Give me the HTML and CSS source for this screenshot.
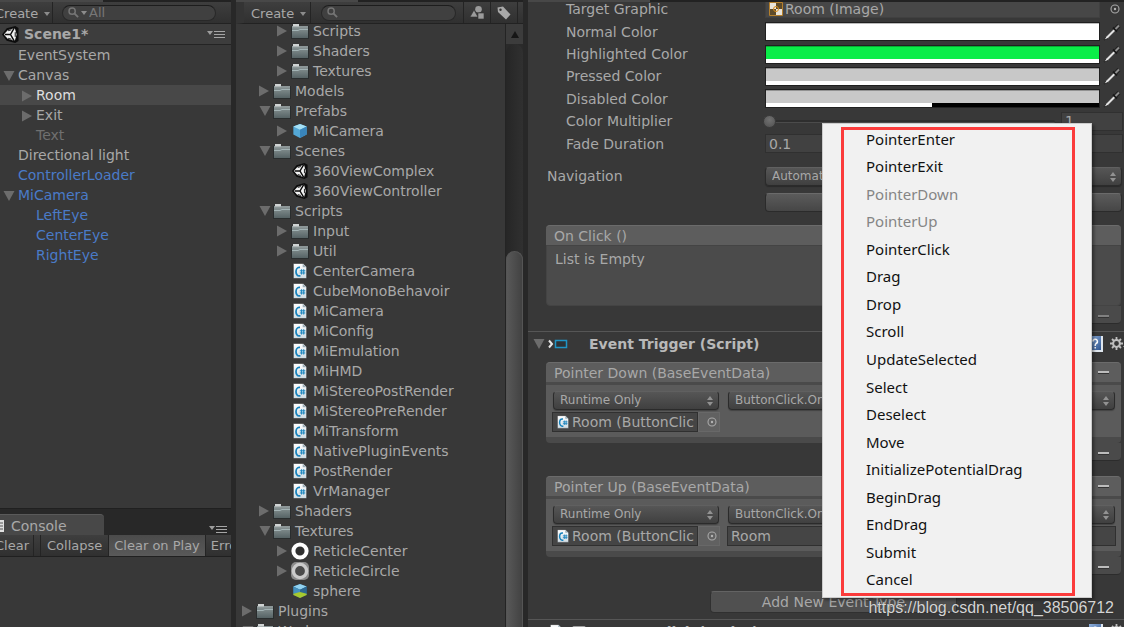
FILE: index.html
```html
<!DOCTYPE html>
<html lang="en">
<head>
<meta charset="utf-8">
<title>Scene1 - Editor</title>
<link rel="stylesheet" href="styles.css">
</head>
<body>
<svg class="defs" aria-hidden="true">
  <defs>
    <linearGradient id="g-folder" x1="0" y1="0" x2="0" y2="1"><stop offset="0" stop-color="#8d9899"/><stop offset="1" stop-color="#566365"/></linearGradient>
    <linearGradient id="g-doc" x1="0" y1="0" x2="0" y2="1"><stop offset="0" stop-color="#fff"/><stop offset="1" stop-color="#cfdbe2"/></linearGradient>
    <linearGradient id="g-help" x1="0" y1="0" x2="1" y2="1"><stop offset="0" stop-color="#8fb0dc"/><stop offset="1" stop-color="#2f5590"/></linearGradient>
  </defs>
  <symbol id="right" viewBox="0 0 10 12"><path d="M0 0.5L10 6L0 11.5z" fill="#6c6c6c"/></symbol>
  <symbol id="down" viewBox="0 0 12 10"><path d="M0.5 0h11L6 10z" fill="#6c6c6c"/></symbol>
  <symbol id="folder" viewBox="0 0 18 16"><path d="M0 3h18v13H0z" fill="#292d2e"/><path d="M1 3h16v12H1z" fill="url(#g-folder)"/><path d="M2 4V1h6v3z" fill="#d0d4d4"/><path d="M1 4h16" stroke="#8f999a"/><path d="M1 7.500h6l2-1h8" fill="none" stroke="#a3b3b5"/></symbol>
  <symbol id="cs" viewBox="0 0 16 18"><path d="M0.500 0.500h11l4 4v13h-15z" fill="url(#g-doc)" stroke="#202020" stroke-width=".6"/><path d="M11 .8v4h4z" fill="#9db0ba"/><path d="M8 5H7a3.500 4.800 0 0 0 0 9.600h1.500" fill="none" stroke="#1782bc" stroke-width="2"/><path d="M9.800 7v6M12.200 7v6M7.800 8.800h6.200M7.800 11.200h6.200" stroke="#1782bc" stroke-width="1.100"/></symbol>
  <symbol id="unity" viewBox="0 0 18 18"><path d="M0 9L5 2.500L14 0L17.500 2V16L14 18L5 15.500z" fill="#0d0d0d"/><path d="M2 9L6 4.500L13.500 2L15.500 9L13.500 16L6 13.500z" fill="#f2f2f2"/><path d="M9 9H3M9 9L13 2M9 9L13 16" stroke="#0d0d0d" stroke-width="1.600"/><path d="M6.500 5L10 4M6.500 13L10 14M14 6.500v5" stroke="#0d0d0d" stroke-width="1"/></symbol>
  <symbol id="cube" viewBox="0 0 16 18"><path d="M8 1L15.500 4V13L8 17L.5 13V4z" fill="#54a8d6"/><path d="M8 1L15.500 4L8 7.500L.5 4z" fill="#a5e0f5"/><path d="M8 7.500L15.500 4V13L8 17z" fill="#3985bb"/></symbol>
  <symbol id="sphere" viewBox="0 0 16 18"><path d="M8 1L15.500 4V13L8 17L.5 13V4z" fill="#2a6389"/><path d="M8 1L15.500 4L8 7.500L.5 4z" fill="#91d2f0"/><path d="M.5 4L8 7.500V11L.5 12z" fill="#4490bd"/><path d="M15.500 4L8 7.500V11L15.500 12z" fill="#2c6791"/><path d="M.5 12L8 10L15.500 12V13.500L8 17L.5 13.500z" fill="#a6c930"/></symbol>
  <symbol id="ring" viewBox="0 0 18 18"><circle cx="9" cy="9" r="6.600" fill="#303030" stroke="#fff" stroke-width="4"/></symbol>
  <symbol id="ring2" viewBox="0 0 18 18"><rect width="18" height="18" rx="5" fill="#8b8b8b"/><circle cx="9" cy="9" r="6.600" fill="#4b4b4b" stroke="#cbcbcb" stroke-width="3.400"/></symbol>
  <symbol id="search" viewBox="0 0 12 12"><circle cx="4.500" cy="4.500" r="3.400" fill="none" stroke="#757575" stroke-width="1.600"/><path d="M7 7l4 4" stroke="#757575" stroke-width="2"/></symbol>
  <symbol id="caret" viewBox="0 0 6 4"><path d="M0 0h6L3 4z" fill="#8c8c8c"/></symbol>
  <symbol id="options" viewBox="0 0 18 9"><path d="M0 1h6L3 5z" fill="#9d9d9d"/><path d="M7 1.500h11M7 4.500h11M7 7.500h11" stroke="#a6a6a6"/></symbol>
  <symbol id="shapes" viewBox="0 0 14 13"><circle cx="8.500" cy="3.300" r="3.300" fill="#9b9b9b"/><path d="M0 11L4 4L8 11z" fill="#9b9b9b" stroke="#333" stroke-width=".6"/><path d="M8 7h6v6H8z" fill="#9b9b9b" stroke="#333" stroke-width=".6"/></symbol>
  <symbol id="tag" viewBox="0 0 14 14"><path d="M.5 1.500L6 .5L13.500 8.500L9 13.500L1 6z" fill="#a8a8a8"/><circle cx="3.500" cy="3.700" r="1.200" fill="#333"/></symbol>
  <symbol id="target" viewBox="0 0 10 10"><circle cx="5" cy="5" r="4" fill="none" stroke="#a8a8a8" stroke-width="1.100"/><circle cx="5" cy="5" r="1.200" fill="#b4b4b4"/></symbol>
  <symbol id="pipette" viewBox="0 0 18 18"><path d="M1 17L3 13.500L11 5.500L13 7.500L5 15.500z" fill="#e2e2e2" stroke="#1c1c1c" stroke-width=".8"/><path d="M10 4.500l4 4" stroke="#181818" stroke-width="2"/><path d="M12.500 6L16 2.500" stroke="#202020" stroke-width="4"/><path d="M12.500 6L16 2.500" stroke="#8d8d8d" stroke-width="2"/></symbol>
  <symbol id="updown" viewBox="0 0 6 10"><path d="M0 4h6L3 0zM0 6h6L3 10z" fill="#929292"/></symbol>
  <symbol id="sprite" viewBox="0 0 14 14"><path d="M.5 .5h13v13H.5z" fill="#5e4b2a" stroke="#b5802c"/><path d="M1 1h6v6H1zM7 7h6v6H7z" fill="#e9e4da"/><circle cx="7" cy="7" r="2.500" fill="none" stroke="#d98e1d" stroke-width="1"/></symbol>
  <symbol id="trigger" viewBox="0 0 20 10"><path d="M1 1.500L4 5L1 8.500" fill="none" stroke="#e6e6e6" stroke-width="2"/><path d="M7.500 1.500h11v7h-11z" fill="#2d3235" stroke="#1f95c6" stroke-width="1.500"/></symbol>
  <symbol id="gear" viewBox="0 0 20 14"><circle cx="6.500" cy="6.500" r="3.400" fill="none" stroke="#c0c0c0" stroke-width="2"/><path d="M6.500 0v3M6.500 10v3M0 6.500h3M10 6.500h3M2 2l2 2M9 9l2 2M11 2L9 4M4 9l-2 2" stroke="#c0c0c0" stroke-width="1.800"/><path d="M13 9h6l-3 4z" fill="#c0c0c0"/></symbol>
  <symbol id="help" viewBox="0 0 14 16"><path d="M0 0h14v16H0z" fill="#dfe6ee"/><path d="M0 0h12v14H0z" fill="url(#g-help)"/><path d="M4 5.500a2.200 2.200 0 1 1 3 2L6.200 9v1M6.200 11v1.500" fill="none" stroke="#fff" stroke-width="1.500"/></symbol>
  <symbol id="consoleicon" viewBox="0 0 4 12"><path d="M0 0h4v12H0z" fill="#e0e0e0"/><path d="M0 3h3M0 6h3M0 9h3" stroke="#555"/></symbol>
</svg>

<main class="editor">
  <section class="column">
    <div class="tabstrip"><span class="tabedge"></span></div>
    <div class="panel hierarchy">
      <div class="toolbar">
        <button class="create create-cut">Create <svg class="i-caret"><use href="#caret"/></svg></button>
        <label class="search"><svg class="i-search"><use href="#search"/></svg><svg class="i-caret"><use href="#caret"/></svg><input type="text" placeholder="All" aria-label="Search hierarchy"></label>
      </div>
      <div class="scene"><svg class="i-scene"><use href="#unity"/></svg><strong>Scene1*</strong><svg class="i-options"><use href="#options"/></svg></div>
      <ul class="tree">
        <li>EventSystem</li>
        <li class="open"><svg class="i-down"><use href="#down"/></svg>Canvas</li>
        <li class="child selected"><svg class="i-right"><use href="#right"/></svg>Room</li>
        <li class="child"><svg class="i-right"><use href="#right"/></svg>Exit</li>
        <li class="child inactive">Text</li>
        <li>Directional light</li>
        <li class="prefab">ControllerLoader</li>
        <li class="prefab open"><svg class="i-down"><use href="#down"/></svg>MiCamera</li>
        <li class="child prefab">LeftEye</li>
        <li class="child prefab">CenterEye</li>
        <li class="child prefab">RightEye</li>
      </ul>
    </div>
    <div class="console-tabs"><div class="console-tab"><svg class="i-console"><use href="#consoleicon"/></svg>Console</div><svg class="i-options"><use href="#options"/></svg></div>
    <div class="console-bar"><button class="clear">Clear</button><span class="spacer"></span><button>Collapse</button><button class="on">Clear on Play</button><button class="err">Error Pause</button></div>
    <div class="console-body"></div>
  </section>

  <section class="column">
    <div class="tabstrip"><span class="tabedge wide"></span></div>
    <div class="toolbar project-bar">
      <button class="create">Create <svg class="i-caret"><use href="#caret"/></svg></button>
      <label class="search"><svg class="i-search"><use href="#search"/></svg><input type="text" aria-label="Search project"></label>
      <button class="tool" aria-label="Filter by type"><svg class="i-shapes"><use href="#shapes"/></svg></button>
      <button class="tool" aria-label="Filter by label"><svg class="i-tag"><use href="#tag"/></svg></button>
      <span class="tool-end"></span>
    </div>
    <div class="project">
      <ul class="files">
        <li class="l2"><svg class="i-right"><use href="#right"/></svg><svg class="i-file"><use href="#folder"/></svg>Scripts</li>
        <li class="l2"><svg class="i-right"><use href="#right"/></svg><svg class="i-file"><use href="#folder"/></svg>Shaders</li>
        <li class="l2"><svg class="i-right"><use href="#right"/></svg><svg class="i-file"><use href="#folder"/></svg>Textures</li>
        <li class="l1"><svg class="i-right"><use href="#right"/></svg><svg class="i-file"><use href="#folder"/></svg>Models</li>
        <li class="l1"><svg class="i-down"><use href="#down"/></svg><svg class="i-file"><use href="#folder"/></svg>Prefabs</li>
        <li class="l2"><svg class="i-right"><use href="#right"/></svg><svg class="i-file"><use href="#cube"/></svg>MiCamera</li>
        <li class="l1"><svg class="i-down"><use href="#down"/></svg><svg class="i-file"><use href="#folder"/></svg>Scenes</li>
        <li class="l2 leaf"><svg class="i-file"><use href="#unity"/></svg>360ViewComplex</li>
        <li class="l2 leaf"><svg class="i-file"><use href="#unity"/></svg>360ViewController</li>
        <li class="l1"><svg class="i-down"><use href="#down"/></svg><svg class="i-file"><use href="#folder"/></svg>Scripts</li>
        <li class="l2"><svg class="i-right"><use href="#right"/></svg><svg class="i-file"><use href="#folder"/></svg>Input</li>
        <li class="l2"><svg class="i-right"><use href="#right"/></svg><svg class="i-file"><use href="#folder"/></svg>Util</li>
        <li class="l2 leaf"><svg class="i-file"><use href="#cs"/></svg>CenterCamera</li>
        <li class="l2 leaf"><svg class="i-file"><use href="#cs"/></svg>CubeMonoBehavoir</li>
        <li class="l2 leaf"><svg class="i-file"><use href="#cs"/></svg>MiCamera</li>
        <li class="l2 leaf"><svg class="i-file"><use href="#cs"/></svg>MiConfig</li>
        <li class="l2 leaf"><svg class="i-file"><use href="#cs"/></svg>MiEmulation</li>
        <li class="l2 leaf"><svg class="i-file"><use href="#cs"/></svg>MiHMD</li>
        <li class="l2 leaf"><svg class="i-file"><use href="#cs"/></svg>MiStereoPostRender</li>
        <li class="l2 leaf"><svg class="i-file"><use href="#cs"/></svg>MiStereoPreRender</li>
        <li class="l2 leaf"><svg class="i-file"><use href="#cs"/></svg>MiTransform</li>
        <li class="l2 leaf"><svg class="i-file"><use href="#cs"/></svg>NativePluginEvents</li>
        <li class="l2 leaf"><svg class="i-file"><use href="#cs"/></svg>PostRender</li>
        <li class="l2 leaf"><svg class="i-file"><use href="#cs"/></svg>VrManager</li>
        <li class="l1"><svg class="i-right"><use href="#right"/></svg><svg class="i-file"><use href="#folder"/></svg>Shaders</li>
        <li class="l1"><svg class="i-down"><use href="#down"/></svg><svg class="i-file"><use href="#folder"/></svg>Textures</li>
        <li class="l2"><svg class="i-right"><use href="#right"/></svg><svg class="i-file i-big"><use href="#ring"/></svg>ReticleCenter</li>
        <li class="l2"><svg class="i-right"><use href="#right"/></svg><svg class="i-file i-big"><use href="#ring2"/></svg>ReticleCircle</li>
        <li class="l2 leaf"><svg class="i-file"><use href="#sphere"/></svg>sphere</li>
        <li><svg class="i-right"><use href="#right"/></svg><svg class="i-file"><use href="#folder"/></svg>Plugins</li>
        <li><svg class="i-down"><use href="#down"/></svg><svg class="i-file"><use href="#folder"/></svg>Works</li>
      </ul>
      <div class="scrollbar"><div class="up"><svg class="i-up" viewBox="0 0 8 7"><path d="M4 0L8 7H0z" fill="#161616"/></svg></div><div class="track"><div class="thumb"></div></div></div>
    </div>
  </section>

  <section class="column">
    <div class="tabstrip"><span class="tabedge wide"></span></div>
    <div class="inspector">
      <div class="props">
        <div class="prop"><span class="label">Target Graphic</span><div class="object-field"><svg class="i-sprite"><use href="#sprite"/></svg>Room (Image)</div><button class="pick" aria-label="Pick target graphic"><svg class="i-target"><use href="#target"/></svg></button></div>
        <div class="prop"><span class="label">Normal Color</span><button class="swatch white" aria-label="Normal Color"><span></span></button><button class="pick" aria-label="Pick normal color"><svg class="i-pipette"><use href="#pipette"/></svg></button></div>
        <div class="prop"><span class="label">Highlighted Color</span><button class="swatch green" aria-label="Highlighted Color"><span></span></button><button class="pick" aria-label="Pick highlighted color"><svg class="i-pipette"><use href="#pipette"/></svg></button></div>
        <div class="prop"><span class="label">Pressed Color</span><button class="swatch grey" aria-label="Pressed Color"><span></span></button><button class="pick" aria-label="Pick pressed color"><svg class="i-pipette"><use href="#pipette"/></svg></button></div>
        <div class="prop"><span class="label">Disabled Color</span><button class="swatch grey half" aria-label="Disabled Color"><span></span></button><button class="pick" aria-label="Pick disabled color"><svg class="i-pipette"><use href="#pipette"/></svg></button></div>
        <div class="prop"><label class="label" for="mult">Color Multiplier</label><input class="slider" id="mult" type="range" min="1" max="5" value="1"><input class="field number" type="text" value="1" aria-label="Color Multiplier value"></div>
        <div class="prop"><label class="label" for="fade">Fade Duration</label><input class="field" id="fade" type="text" value="0.1"></div>
      </div>
      <div class="nav">
        <label for="nav">Navigation</label>
        <div class="select"><select id="nav"><option>Automatic</option></select><svg class="i-updown"><use href="#updown"/></svg></div>
        <button class="visualize" aria-label="Visualize"></button>
      </div>
      <div class="event click">
        <h3>On Click ()</h3>
        <div class="empty">List is Empty</div>
        <div class="foot"><button aria-label="Remove" disabled></button></div>
      </div>
      <div class="component">
        <svg class="i-down"><use href="#down"/></svg><svg class="i-trigger"><use href="#trigger"/></svg>
        <h2>Event Trigger (Script)</h2>
        <svg class="i-help"><use href="#help"/></svg><svg class="i-gear"><use href="#gear"/></svg>
      </div>
      <div class="event">
        <h3>Pointer Down (BaseEventData)<button class="dash" aria-label="Remove Pointer Down"></button></h3>
        <div class="call">
          <div class="select"><select aria-label="Call state"><option>Runtime Only</option></select><svg class="i-updown"><use href="#updown"/></svg></div>
          <div class="select"><select aria-label="Function"><option>ButtonClick.OnDown</option></select><svg class="i-updown"><use href="#updown"/></svg></div>
          <div class="object"><div class="object-name"><svg class="i-cs"><use href="#cs"/></svg>Room (ButtonClic</div><button aria-label="Pick object"><svg class="i-target"><use href="#target"/></svg></button></div>
        </div>
        <div class="foot"><button class="dash" aria-label="Remove call"></button></div>
      </div>
      <div class="event">
        <h3>Pointer Up (BaseEventData)<button class="dash" aria-label="Remove Pointer Up"></button></h3>
        <div class="call">
          <div class="select"><select aria-label="Call state"><option>Runtime Only</option></select><svg class="i-updown"><use href="#updown"/></svg></div>
          <div class="select"><select aria-label="Function"><option>ButtonClick.OnUp</option></select><svg class="i-updown"><use href="#updown"/></svg></div>
          <div class="object"><div class="object-name"><svg class="i-cs"><use href="#cs"/></svg>Room (ButtonClic</div><button aria-label="Pick object"><svg class="i-target"><use href="#target"/></svg></button></div>
          <input class="argument" type="text" value="Room" aria-label="Argument">
        </div>
        <div class="foot"><button class="dash" aria-label="Remove call"></button></div>
      </div>
      <button class="add">Add New Event Type</button>
      <div class="component next">
        <svg class="i-cs"><use href="#cs"/></svg><input type="checkbox" aria-label="Enable component" checked>
        <h2>Button Click (Script)</h2>
        <svg class="i-help"><use href="#help"/></svg><svg class="i-gear"><use href="#gear"/></svg>
      </div>
    </div>
  </section>
</main>

<div class="menu" role="menu">
  <button role="menuitem">PointerEnter</button>
  <button role="menuitem">PointerExit</button>
  <button role="menuitem" disabled>PointerDown</button>
  <button role="menuitem" disabled>PointerUp</button>
  <button role="menuitem">PointerClick</button>
  <button role="menuitem">Drag</button>
  <button role="menuitem">Drop</button>
  <button role="menuitem">Scroll</button>
  <button role="menuitem">UpdateSelected</button>
  <button role="menuitem">Select</button>
  <button role="menuitem">Deselect</button>
  <button role="menuitem">Move</button>
  <button role="menuitem">InitializePotentialDrag</button>
  <button role="menuitem">BeginDrag</button>
  <button role="menuitem">EndDrag</button>
  <button role="menuitem">Submit</button>
  <button role="menuitem">Cancel</button>
  <div class="outline"></div>
</div>
<div class="watermark">https://blog.csdn.net/qq_38506712</div>
</body>
</html>
```
FILE: styles.css
```css
* { box-sizing: border-box; }
body {
  margin: 0;
  height: 100vh;
  overflow: hidden;
  background: #282828;
  color: #a8a8a8;
  font: 14px/20px "DejaVu Sans", sans-serif;
  position: relative;
}
button, input, select { font: inherit; color: inherit; margin: 0; padding: 0; border: 0; background: none; min-width: 0; }
button { text-align: left; white-space: nowrap; }
ul, h2, h3 { margin: 0; padding: 0; list-style: none; font-size: 14px; }
svg { flex: none; display: block; }
.defs { position: absolute; width: 0; height: 0; }

/* icon sizes */
.i-right { width: 10px; height: 12px; }
.i-down { width: 12px; height: 10px; }
.i-caret { width: 6px; height: 4px; }
.i-search { width: 11px; height: 11px; }
.i-options { width: 18px; height: 9px; }
.i-scene { width: 17px; height: 17px; }
.i-file { width: 18px; height: 16px; }
.i-big { height: 18px; }
.i-shapes { width: 14px; height: 13px; }
.i-tag { width: 14px; height: 14px; }
.i-up { width: 8px; height: 7px; }
.i-console { width: 4px; height: 12px; }
.i-sprite { width: 14px; height: 14px; }
.i-target { width: 10px; height: 10px; }
.i-pipette { width: 18px; height: 18px; }
.i-updown { width: 6px; height: 10px; }
.i-trigger { width: 20px; height: 10px; }
.i-help { width: 14px; height: 16px; }
.i-gear { width: 20px; height: 14px; }
.i-cs { width: 12px; height: 14px; }

.editor {
  display: grid;
  grid-template-columns: 231fr 287fr 596fr;
  grid-template-rows: 100%;
  column-gap: 5px;
  height: 100%;
}
.column { display: flex; flex-direction: column; min-width: 0; min-height: 0; overflow: hidden; }
.tabstrip { height: 2px; flex: none; background: #222; display: flex; }
.tabedge { width: 103px; background: #484848; }
.tabedge.wide { width: 122px; }

.toolbar {
  display: flex;
  align-items: center;
  flex: none;
  height: 22px;
  background: linear-gradient(#3e3e3e, #303030);
  border-bottom: 1px solid #222;
  font-size: 13px;
}
.create { display: flex; align-items: center; gap: 6px; height: 100%; padding: 2px 4px 0 7px; border-right: 1px solid #242424; }
.create-cut { margin-left: -12px; width: 65px; }
.search {
  display: flex;
  align-items: center;
  gap: 2px;
  flex: 1;
  height: 16px;
  margin: 0 15px 0 9px;
  padding: 0 8px 0 5px;
  background: #404040;
  border: 1px solid #282828;
  border-top-color: #1d1d1d;
  border-radius: 8px;
  min-width: 0;
}
.search input { flex: 1; width: 0; outline: 0; height: 14px; line-height: 14px; }
.search input::placeholder { color: #777; opacity: 1; }
.project-bar { border-left: 8px solid #343434; }
.project-bar .search { margin: 0 7px 0 10px; }
.tool { display: grid; place-items: center; width: 27px; height: 100%; border-left: 1px solid #242424; }
.tool-end { width: 6px; height: 100%; border-left: 1px solid #242424; }

.hierarchy { flex: 1; min-height: 0; background: #383838; border-bottom: 1px solid #202020; }
.scene { display: flex; align-items: center; gap: 5px; height: 21px; padding: 0 6px 0 2px; background: #3d3d3d; border-bottom: 1px solid #242424; }
.scene .i-options { margin-left: auto; }
.tree li { height: 20px; padding: 1px 0 0 18px; display: flex; align-items: center; gap: 4px; line-height: 19px; white-space: nowrap; }
.tree .open { padding-left: 3px; gap: 3px; }
.tree .child { padding-left: 36px; }
.tree .child:has(svg) { padding-left: 22px; }
.tree .selected { background: #484848; color: #dedede; }
.tree .inactive { color: #707070; }
.tree .prefab { color: #4a7bc8; }

.console-tabs { display: flex; align-items: flex-end; justify-content: space-between; flex: none; height: 26px; padding: 5px 4px 0 0; }
.console-tabs .i-options { margin-bottom: 1px; }
.console-tab { display: flex; align-items: center; gap: 7px; width: 104px; height: 21px; padding-top: 2px; background: #484848; border-top: 1px solid #5a5a5a; border-radius: 0 4px 0 0; }
.console-bar { display: flex; flex: none; height: 22px; overflow: hidden; background: linear-gradient(#3e3e3e, #303030); border-bottom: 1px solid #202020; font-size: 13px; }
.console-bar button { padding: 0 6px; border-right: 1px solid #242424; flex: none; }
.console-bar .clear { width: 43px; margin-left: -9px; padding: 0 4px; }
.console-bar .spacer { flex: none; width: 7px; border-right: 1px solid #242424; }
.console-bar .on { padding: 0 5px; background: linear-gradient(#4b4b4b, #595959); }
.console-bar .err { width: 70px; padding-left: 5px; }
.console-body { flex: none; height: 70px; background: #383838; }

.project { flex: 1; min-height: 0; display: flex; background: #383838; }
.files { flex: 1; overflow: hidden; display: flex; flex-direction: column; justify-content: flex-start; }
.files li { flex: none; height: 20px; padding: 1px 0 0 6px; display: flex; align-items: center; gap: 4px; white-space: nowrap; }
.files li:first-child { margin-top: -4px; }
.files .i-down { margin-right: -2px; }
.files .l1 { padding-left: 23px; }
.files .l2 { padding-left: 41px; }
.files .leaf { padding-left: 55px; }
.scrollbar { width: 18px; display: flex; flex-direction: column; background: #2a2a2a; border-left: 1px solid #242424; }
.up { height: 20px; display: grid; place-items: center; background: #3c3c3c; }
.track { flex: 1; display: flex; padding-top: 207px; border-radius: 9px 9px 0 0; background: linear-gradient(90deg, #262626, #303030); }
.thumb { flex: 1; background: linear-gradient(90deg, #585858, #424242); border: 1px solid #555; border-bottom: 0; border-radius: 9px 9px 0 0; }

.inspector { flex: 1; min-height: 0; overflow: hidden; background: #383838; }
.props { display: grid; grid-template-rows: repeat(7, 1fr); height: 157px; margin-top: -4px; padding-left: 38px; }
.prop { display: flex; align-items: center; min-height: 0; padding-right: 1px; }
.label { width: 199px; flex: none; }
.object-field { flex: 1; display: flex; align-items: center; gap: 2px; height: 18px; padding-left: 3px; background: #474747; border: 1px solid #404040; }
.pick { width: 23px; display: grid; justify-content: end; padding-right: 2px; }
.prop:first-child .pick { padding-right: 3px; }
.swatch { flex: 1; display: flex; flex-direction: column; justify-content: flex-end; height: 19px; border: 1px solid #202020; box-shadow: inset 0 1px #0004; }
.swatch span { height: 4px; background: #fff; }
.swatch.white { background: #fff; }
.swatch.green { background: #0aed48; }
.swatch.grey { background: #c8c8c8; }
.swatch.half span { background: linear-gradient(90deg, #fff 50%, #000 50%); }
.slider { flex: 1; height: 14px; margin-left: -2px; appearance: none; }
.slider::-webkit-slider-runnable-track { height: 3px; background: #2e2e2e; border-bottom: 1px solid #4b4b4b; border-radius: 2px; }
.slider::-webkit-slider-thumb { appearance: none; width: 13px; height: 13px; margin-top: -5px; border-radius: 50%; background: radial-gradient(circle at 50% 35%, #717171, #505050); border: 1px solid #3c3c3c; }
.field { flex: 1; height: 19px; padding: 0 3px; background: #414141; border: 1px solid #303030; line-height: 16px; }
.field.number { flex: none; width: 62px; margin-left: 6px; }

.select { position: relative; display: flex; height: 19px; font-size: 12px; border: 1px solid #2b2b2b; border-top-color: #606060; border-radius: 4px; background: linear-gradient(#565656, #404040); box-shadow: 0 1px 1px #0004; }
.select select { appearance: none; flex: 1; height: 16px; line-height: 16px; padding: 0 20px 0 6px; outline: 0; }
.select svg { position: absolute; right: 5px; top: 4px; pointer-events: none; }
.nav { display: grid; grid-template-columns: 218px 1fr; row-gap: 7px; align-items: center; margin: 11px 2px 0 19px; }
.visualize { grid-column: 2; height: 19px; border: 1px solid #2b2b2b; border-top-color: #6a6a6a; border-radius: 4px; background: linear-gradient(#5b5b5b, #464646); }

.event { margin: 0 3px 15px 18px; }
.event h3 { display: flex; align-items: center; justify-content: space-between; height: 20px; padding: 0 10px 0 8px; border-top: 1px solid #6b6b6b; border-radius: 4px 4px 0 0; background: #5d5d5d; font-weight: 400; }
.click { margin-top: 13px; margin-bottom: 7px; }
.empty { height: 61px; padding: 3px 8px; background: #4b4b4b; border: 1px solid #444; border-radius: 0 0 4px 4px; }
.foot { display: flex; align-items: center; justify-content: flex-end; height: 18px; width: 61px; margin-left: auto; padding: 3px 12px 0 0; background: #4a4a4a; border-bottom: 1px solid #2c2c2c; border-radius: 0 0 4px 4px; }
.event h3 { padding-right: 12px; }
.foot button, .dash { width: 11px; height: 3px; background: #bcbcbc; border-bottom: 1px solid #333; }
.foot button:disabled { background: #808080; }
.call { display: grid; grid-template-columns: 168px 1fr; column-gap: 7px; row-gap: 2px; align-items: start; align-content: start; height: 61px; padding: 6px 5px 0 6px; border: solid #4a4a4a; border-width: 3px 0 6px; border-radius: 0 0 4px 4px; background: #5b5b5b; }
.call .select { margin: 0 1px; }
.object { display: flex; height: 20px; background: #616161; }
.object-name { display: flex; align-items: center; gap: 3px; flex: 1; min-width: 0; overflow: hidden; white-space: nowrap; padding-left: 4px; background: #454545; border: 1px solid #303030; }
.object button { width: 22px; padding-left: 6px; display: grid; place-items: center; border: 1px solid #686868; }
.argument { height: 20px; padding: 0 3px; background: #454545; border: 1px solid #303030; }

.component { display: flex; align-items: center; height: 31px; padding: 0 0 7px 5px; border-top: 1px solid #565656; overflow: hidden; }
.component h2 { margin-left: 21px; flex: 1; color: #b8b8b8; white-space: nowrap; }
.component .i-trigger { margin-left: 3px; }
.component .i-help { margin-right: 7px; }
.component .i-gear { margin-right: -6px; }
.add { display: block; width: 247px; height: 22px; margin: 16px auto 6px 182px; text-align: center; border: 1px solid #303030; border-top-color: #636363; border-radius: 4px; background: #505050; line-height: 19px; }
.next { padding: 4px 0 0 22px; align-items: flex-start; }
.next h2 { margin-left: 12px; line-height: 16px; }
.next input { appearance: none; width: 14px; height: 14px; margin: 2px 0 0 10px; background: #4a4a4a; border: 1px solid #222; border-top: 2px solid #a0a0a0; border-radius: 2px; }

.menu {
  position: absolute;
  left: 822px;
  top: 123px;
  width: 270px;
  height: 475px;
  display: grid;
  grid-template-rows: repeat(17, 1fr);
  padding: 1px 0 4px;
  background: #f1f1f1;
  border: 1px solid #ccc;
  box-shadow: 2px 2px 3px #0006;
  font: 15px/20px "Noto Sans", sans-serif;
  color: #111;
}
.menu button { padding-left: 43px; }
.menu button:disabled { color: #858585; }
.outline { position: absolute; inset: 3px 16px 1px 18px; border: 3px solid #fb3b3b; pointer-events: none; }
.watermark { position: absolute; right: 10px; bottom: 9px; font: 16px/20px "Liberation Sans", sans-serif; color: #d4d4d4; text-shadow: 0 0 1px #222; }
```
